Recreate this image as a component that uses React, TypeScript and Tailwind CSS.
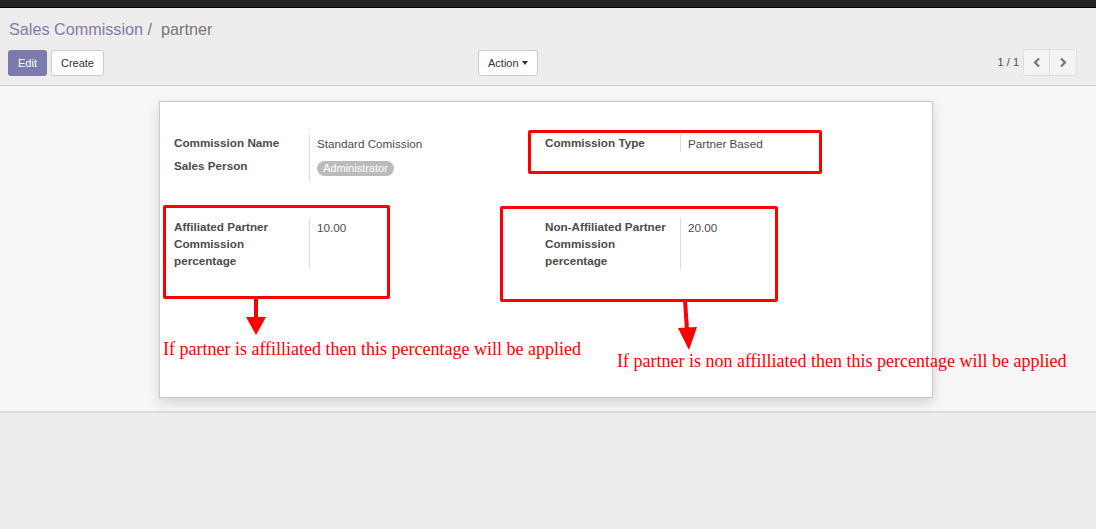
import React from "react";

const sans = { fontFamily: '"Liberation Sans", Arial, sans-serif' };
const serif = { fontFamily: '"Liberation Serif", "Times New Roman", serif' };

function Field({ label, children, tall }: { label: React.ReactNode; children: React.ReactNode; tall?: boolean }) {
  return (
    <div className="flex">
      <div className="w-[135px] shrink-0 font-bold text-[#4c4c4c] text-[11.7px] leading-[17px] pr-2">{label}</div>
      <div className={"border-l border-[#ddd] pl-[7px] pt-[1px] text-[#4c4c4c] text-[11.7px] leading-[17px] " + (tall ? "h-[51px]" : "")}>
        {children}
      </div>
    </div>
  );
}

export default function App() {
  return (
    <div className="w-[1096px] h-[529px] bg-[#eeecec] flex flex-col overflow-hidden" style={sans}>
      {/* top navbar strip */}
      <div className="h-[8px] bg-[#222] border-b border-black shrink-0" />

      {/* control panel */}
      <div className="h-[78px] shrink-0 border-b border-[#ccc] px-[8px] pt-[11px]">
        <div className="text-[16.2px] leading-[20px] pl-[1px]">
          <span className="text-[#7c7bad]">Sales Commission</span>
          <span className="text-[#777]"> / &nbsp;partner</span>
        </div>
        <div className="flex items-center mt-[10px]">
          <div className="flex gap-[4px] w-[470px]">
            <button className="h-[26px] px-[10px] pt-[1px] rounded-[3px] bg-[#7c7bad] text-white text-[11px]">Edit</button>
            <button className="h-[26px] px-[9px] pt-[1px] rounded-[3px] bg-white border border-[#ccc] text-[#333] text-[11px]">Create</button>
          </div>
          <button className="h-[26px] px-[9px] pt-[1px] rounded-[3px] bg-white border border-[#ccc] text-[#333] text-[11px] flex items-center gap-[3px]">
            Action
            <span className="w-0 h-0 border-l-[3px] border-r-[3px] border-t-[4px] border-l-transparent border-r-transparent border-t-[#333]" />
          </button>
          <div className="ml-auto flex items-center mr-[11px]">
            <span className="text-[11px] text-[#4c4c4c] mr-[4px]">1 / 1</span>
            <div className="flex h-[27px] border border-[#ddd] rounded-[3px] bg-[#f5f4f4]">
              <button className="w-[26px] flex items-center justify-center border-r border-[#ddd]">
                <svg width="9" height="11" viewBox="0 0 9 11"><path d="M7 1.5L3 5.5L7 9.5" stroke="#777" strokeWidth="2.2" fill="none" /></svg>
              </button>
              <button className="w-[26px] flex items-center justify-center">
                <svg width="9" height="11" viewBox="0 0 9 11"><path d="M2 1.5L6 5.5L2 9.5" stroke="#777" strokeWidth="2.2" fill="none" /></svg>
              </button>
            </div>
          </div>
        </div>
      </div>

      {/* sheet area */}
      <div className="relative h-[327px] shrink-0 border-b-2 border-[#ddd] bg-[#f7f7f7] pt-[15px]">
        <div className="ml-[159px] w-[774px] h-[297px] bg-white border border-[#c8c8cc] shadow-[0_5px_12px_rgba(0,0,0,0.15)] px-[14px] pt-[32px]">
          <div className="grid grid-cols-[371px_1fr]">
            <div className="flex">
              <div className="w-[135px] shrink-0 font-bold text-[#4c4c4c] text-[11.7px] leading-[17px]">
                <div className="h-[23px]">Commission Name</div>
                <div>Sales Person</div>
              </div>
              <div className="border-l border-[#ddd] pl-[7px] h-[48px] text-[#4c4c4c] text-[11.7px] leading-[17px] pt-[1px]">
                <div className="h-[24px]">Standard Comission</div>
                <span className="inline-block bg-[#bbb] text-white text-[11px] leading-[15px] px-[6px] rounded-full">Administrator</span>
              </div>
            </div>
            <div>
              <Field label="Commission Type">Partner Based</Field>
            </div>
          </div>

          <div className="grid grid-cols-[371px_1fr] mt-[36px]">
            <Field tall label={<>Affiliated Partner<br />Commission<br />percentage</>}>10.00</Field>
            <Field tall label={<>Non-Affiliated Partner<br />Commission<br />percentage</>}>20.00</Field>
          </div>
        </div>

        {/* red annotations */}
        <div className="absolute left-[528px] top-[44px] w-[294px] h-[44px] border-[3px] border-[#f00] rounded-[2px]" />
        <div className="absolute left-[163px] top-[119px] w-[227px] h-[94px] border-[3px] border-[#f00] rounded-[2px]" />
        <div className="absolute left-[500px] top-[120px] w-[278px] h-[96px] border-[3px] border-[#f00] rounded-[2px]" />

        <svg className="absolute left-[240px] top-[211px]" width="32" height="40" viewBox="0 0 32 40">
          <line x1="16" y1="0" x2="16" y2="22" stroke="#f00" strokeWidth="4" />
          <polygon points="6,20 26,20 16,38" fill="#f00" />
        </svg>
        <svg className="absolute left-[672px] top-[214px]" width="32" height="52" viewBox="0 0 32 52">
          <line x1="13" y1="0" x2="15" y2="30" stroke="#f00" strokeWidth="4" />
          <polygon points="6,28 25,27 17,50" fill="#f00" />
        </svg>

        <div className="absolute left-[163px] top-[252px] text-[#f00] text-[18px] leading-[22px] whitespace-nowrap" style={serif}>
          If partner is affilliated then this percentage will be applied
        </div>
        <div className="absolute left-[617px] top-[264px] text-[#f00] text-[18px] leading-[22px] whitespace-nowrap" style={serif}>
          If partner is non affilliated then this percentage will be applied
        </div>
      </div>

      <div className="flex-1" />
    </div>
  );
}
